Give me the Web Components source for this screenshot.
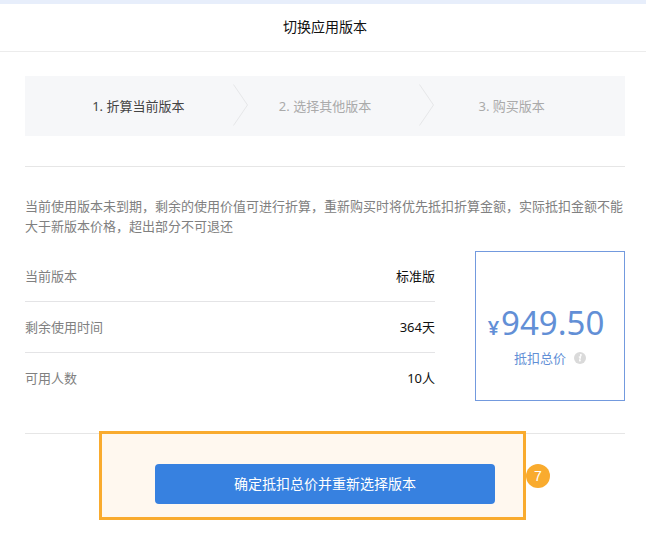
<!DOCTYPE html>
<html lang="zh-CN">
<head>
<meta charset="utf-8">
<meta name="viewport" content="width=device-width, initial-scale=1">
<title>切换应用版本</title>
<style>
  body {
    margin: 0;
    background: #fff;
    color: #111;
    font-family: "Noto Sans", "Noto Sans CJK SC", sans-serif;
    font-size: 13px;
    line-height: 20px;
  }
</style>
</head>
<body>
<switch-dialog heading="切换应用版本">
  <step-bar>
    <step-item current>1. 折算当前版本</step-item>
    <step-item arrow>2. 选择其他版本</step-item>
    <step-item arrow>3. 购买版本</step-item>
  </step-bar>
  <version-summary>
    <span slot="note">当前使用版本未到期，剩余的使用价值可进行折算，重新购买时将优先抵扣折算金额，实际抵扣金额不能大于新版本价格，超出部分不可退还</span>
    <info-row label="当前版本">标准版</info-row>
    <info-row label="剩余使用时间">364天</info-row>
    <info-row label="可用人数">10人</info-row>
    <price-card slot="price" amount="949.50">抵扣总价</price-card>
  </version-summary>
  <callout-mark slot="action" number="7">
    <primary-button>确定抵扣总价并重新选择版本</primary-button>
  </callout-mark>
</switch-dialog>

<script>
const define = (name, html, setup) => {
  const template = document.createElement('template');
  template.innerHTML = html;
  customElements.define(name, class extends HTMLElement {
    constructor() {
      super();
      this.attachShadow({ mode: 'open' }).append(template.content.cloneNode(true));
    }
    connectedCallback() {
      if (setup) setup(this, this.shadowRoot);
    }
  });
};

define('switch-dialog', `
  <style>
    :host { display: block; border-top: 4px solid #e7eefb; }
    header { padding: 13px 21px 14px 25px; border-bottom: 1px solid #ececec; text-align: center; }
    h1 { margin: 0; font-size: 14px; line-height: 20px; font-weight: 400; color: #111; }
    main { padding: 24px 21px 38px 25px; }
    footer { display: flex; justify-content: center; padding-top: 30px; border-top: 1px solid #e6e6e6; }
  </style>
  <header><h1></h1></header>
  <main>
    <slot></slot>
    <footer><slot name="action"></slot></footer>
  </main>`,
  (el, root) => { root.querySelector('h1').textContent = el.getAttribute('heading'); });

define('step-bar', `
  <style>
    :host { display: grid; grid-template-columns: repeat(3, 1fr); padding: 0 20px; height: 60px; background: #f6f7f9; }
  </style>
  <slot></slot>`);

define('step-item', `
  <style>
    :host { display: grid; grid-template-columns: 16px 1fr 16px; align-items: center; color: #aaa; }
    :host([current]) { color: #444; }
    svg { display: none; }
    :host([arrow]) svg { display: block; }
    span { grid-column: 2; grid-row: 1; text-align: center; white-space: nowrap; }
  </style>
  <svg width="18" height="44" viewBox="0 0 18 44" fill="none" stroke="#e6e7e9" aria-hidden="true"><path d="M1.5 .5 15.5 21 1.5 41.5"/></svg>
  <span><slot></slot></span>`);

define('version-summary', `
  <style>
    :host { display: block; margin-top: 30px; padding: 29px 0; border-top: 1px solid #e6e6e6; }
    p { margin: 0; color: #808080; }
    .columns { display: flex; gap: 40px; margin-top: 15px; align-items: flex-start; }
    .rows { flex: 1; }
  </style>
  <p><slot name="note"></slot></p>
  <div class="columns">
    <div class="rows"><slot></slot></div>
    <slot name="price"></slot>
  </div>`);

define('info-row', `
  <style>
    :host { display: block; border-bottom: 1px solid #e4e4e6; }
    :host(:last-of-type) { border-bottom-color: transparent; }
    dl { display: flex; justify-content: space-between; margin: 0; padding: 15px 0; }
    dt { color: #808080; }
    dd { margin: 0; color: #111; }
  </style>
  <dl><dt></dt><dd><slot></slot></dd></dl>`,
  (el, root) => { root.querySelector('dt').textContent = el.getAttribute('label'); });

define('price-card', `
  <style>
    :host { display: flex; flex-direction: column; align-items: center; justify-content: center; box-sizing: border-box;
      width: 150px; height: 150px; padding: 18px 8px 0 0; border: 1px solid #739ade; color: #628fd6; }
    .amount { display: flex; align-items: baseline; gap: 2px; line-height: 40px; }
    b { font-size: 20px; font-weight: 600; }
    .value { font-size: 33px; }
    .label { display: flex; align-items: center; gap: 8px; padding-left: 8px; }
    button { display: block; width: 12px; height: 12px; padding: 0; border: 0; background: none; }
    svg { display: block; }
  </style>
  <div class="amount"><b>¥</b><span class="value"></span></div>
  <div class="label">
    <slot></slot>
    <button type="button" aria-label="说明">
      <svg width="12" height="12" viewBox="0 0 12 12"><circle cx="6" cy="6" r="6" fill="#dadada"/><circle cx="6.8" cy="2.9" r="1" fill="#fff"/><path d="M4.8 5.1 6.5 4.8 5.6 8.7Q5.6 9.3 6.8 8.6" fill="none" stroke="#fff" stroke-width="1.2"/></svg>
    </button>
  </div>`,
  (el, root) => { root.querySelector('.value').textContent = el.getAttribute('amount'); });

define('primary-button', `
  <style>
    :host { display: block; }
    button { display: block; width: 100%; height: 40px; padding: 0; border: 0; border-radius: 4px;
      background: #3781e0; color: #fff; font: inherit; font-size: 14px; line-height: 20px; }
  </style>
  <button type="button"><slot></slot></button>`);

define('callout-mark', `
  <style>
    :host { display: block; position: relative; flex: 0 1 340px; }
    .frame { position: absolute; inset: -33px -31px -16px -56px; box-sizing: border-box;
      border: 3px solid #f9ab2e; background: #fff8ef; }
    .badge { position: absolute; right: -55px; top: 0; width: 24px; height: 24px; border-radius: 50%;
      background: #f9ab2e; color: #fff; font-size: 14px; line-height: 24px; text-align: center;
      font-family: "Liberation Sans", sans-serif; }
    .content { position: relative; }
  </style>
  <div class="frame"></div>
  <div class="content"><slot></slot></div>
  <span class="badge"></span>`,
  (el, root) => { root.querySelector('.badge').textContent = el.getAttribute('number'); });
</script>
</body>
</html>
